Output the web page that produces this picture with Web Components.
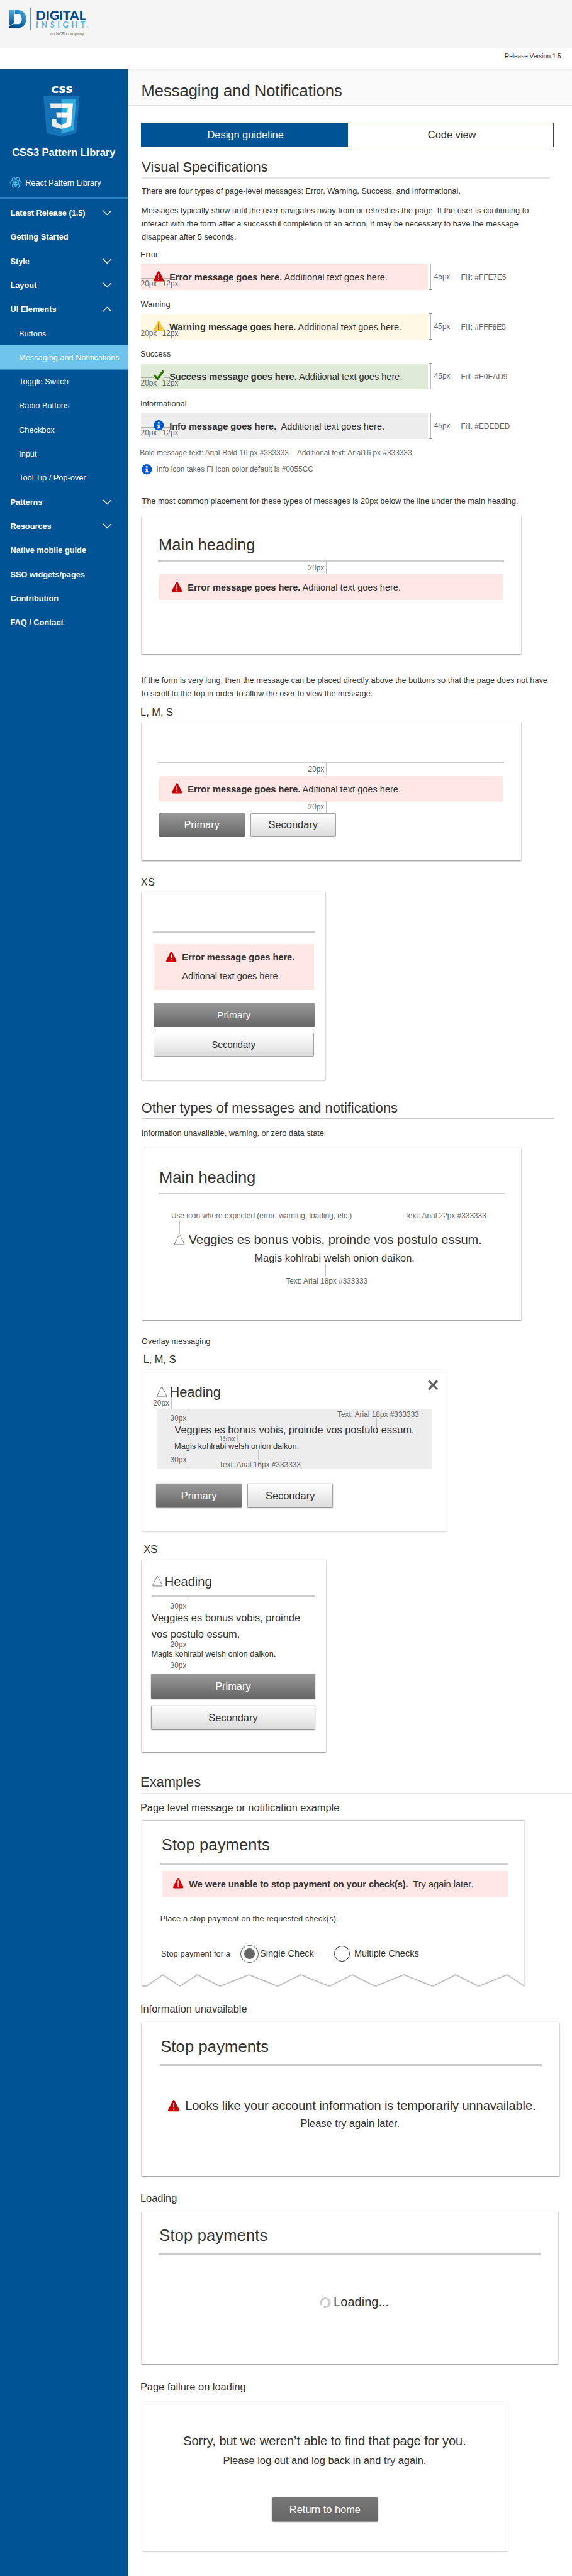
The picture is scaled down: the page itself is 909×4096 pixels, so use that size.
<!DOCTYPE html>
<html lang="en">
<head>
<meta charset="utf-8">
<title>Messaging and Notifications</title>
<style>
  html, body { margin: 0; padding: 0; background: #fff; }
  body { height: 4096px; overflow: hidden; font-family: "Liberation Sans", Arial, sans-serif; color: #333; }
</style>
</head>
<body>
<pattern-app></pattern-app>
<script>
const define = (name, html, setup) => {
  const tpl = document.createElement('template');
  tpl.innerHTML = html;
  customElements.define(name, class extends HTMLElement {
    constructor() {
      super();
      this.attachShadow({ mode: 'open' }).appendChild(tpl.content.cloneNode(true));
    }
    connectedCallback() { if (setup) setup(this, this.shadowRoot); }
  });
};

/* ---------- icons ---------- */
const TRI = 'M7.5 1.1Q9-.9 10.5 1.1L17.7 15.3Q18.6 18 16.2 18H1.8Q-.6 18 .3 15.3Z';
const ICONS = {
  error: `<svg viewBox="0 0 18 18"><path d="${TRI}" fill="#c00"/><rect x="8.2" y="5" width="1.7" height="7.2" fill="#fff"/><rect x="8.1" y="13.6" width="1.9" height="2" fill="#fff"/></svg>`,
  warning: `<svg viewBox="0 0 18 18"><path d="${TRI}" fill="#ffc72c"/><rect x="8.2" y="5" width="1.7" height="7.2" fill="#333"/><rect x="8.1" y="13.6" width="1.9" height="2" fill="#333"/></svg>`,
  success: `<svg viewBox="0 0 18 18"><path d="M1.8 9.3L6.8 14.6L16.2 2.2" fill="none" stroke="#2d7400" stroke-width="4" stroke-linejoin="round" stroke-linecap="round"/></svg>`,
  info: `<svg viewBox="0 0 18 18"><circle cx="9" cy="9" r="9" fill="#0055cc"/><rect x="7.5" y="3.4" width="3" height="2.6" fill="#fff"/><path d="M6.2 7.4H10.6V12.6H12V14.4H6.2V12.6H7.6V9.2H6.2Z" fill="#fff"/></svg>`,
  outline: `<svg viewBox="0 0 18 18"><path d="M8 1.3Q9 .1 10 1.3L17.2 15.6Q17.9 17.5 16.2 17.5H1.8Q.1 17.5 .8 15.6Z" fill="none" stroke="#666" stroke-width="1"/></svg>`,
  close: `<svg viewBox="0 0 18 18"><path d="M1.6 1.6L16.4 16.4M16.4 1.6L1.6 16.4" stroke="#666" stroke-width="3.6"/></svg>`,
  spinner: `<svg viewBox="0 0 19 19"><path d="M2.2 13.2A7.6 7.6 0 1 1 6.2 16.5" fill="none" stroke="#ccc" stroke-width="3.4"/></svg>`,
  chevron: `<svg viewBox="0 0 16 10"><path d="M.7 .9L8 8.3L15.3 .9" fill="none" stroke="#fff" stroke-width="1.5"/></svg>`,
  react: `<svg viewBox="0 0 22 20"><g fill="none" stroke="#5cc6f0" stroke-width="1"><ellipse cx="11" cy="10" rx="10" ry="3.8"/><ellipse cx="11" cy="10" rx="10" ry="3.8" transform="rotate(60 11 10)"/><ellipse cx="11" cy="10" rx="10" ry="3.8" transform="rotate(120 11 10)"/></g><circle cx="11" cy="10" r="2.2" fill="#5cc6f0"/></svg>`,
  shield: `<svg viewBox="30 0 451 512" preserveAspectRatio="none"><path d="M30 0H481L440 462L255 512L71 462Z" fill="#1572b6"/><path d="M255 472L405 431L440 37H255Z" fill="#33a9dc"/><g fill="#ebebeb"><path d="M115 90H255V143H120Z"/><path d="M190 202H255V264H195Z"/><path d="M134 292H191L195 335L255 356V412L141 379Z"/></g><g fill="#fff"><path d="M255 90H398L375 379L255 412V356L316 335L322 264H255V202H329L335 143H255Z"/></g></svg>`,
};
customElements.define('ui-icon', class extends HTMLElement {
  static observedAttributes = ['name'];
  constructor() {
    super();
    this.attachShadow({ mode: 'open' });
  }
  attributeChangedCallback(attr, old, name) {
    this.shadowRoot.innerHTML = `<style>:host{display:block;flex:none;width:18px;height:18px}svg{display:block;width:100%;height:100%;overflow:visible}</style>${ICONS[name] || ''}`;
  }
});

/* ---------- typography ---------- */
define('ui-text', `<style>
  :host{display:block;font-size:14px;line-height:20px;white-space:nowrap;color:#333}
  :host([size="body"]){line-height:23px}
  :host([size="note"]){font-size:13px;line-height:16px;color:#666}
  :host([size="sub"]){font-size:18px;line-height:24px}
  :host([size="lead"]){font-size:22px;line-height:28px}
  :host([size="h2"]){font-size:24px;line-height:30px}
  :host([size="h1"]){font-size:28px;line-height:34px}
</style><slot></slot>`);
define('ui-rule', `<style>:host{display:block;height:3px;background:#ccc}:host([thin]){height:1px}:host([soft]){height:2px;background:#e4e4e4}</style>`);

/* ---------- top ---------- */
define('top-bar', `<style>
  :host{display:block;height:119px;background:#fff}
  .brand{height:84px;background:#f5f5f5;display:flex;padding:13px 0 0 16px;box-sizing:border-box}
  .mark{display:block;width:30px;height:31px;margin-top:5px}
  i{display:block;width:1.6px;height:40px;background:#6b97c2;margin:0 8px 0 6.6px}
  .release{display:flex;justify-content:flex-end;font-size:11px;line-height:14px;padding:8.5px 19px 0 0;color:#333}
  svg{overflow:visible}
</style>
<div class="brand">
  <svg class="mark" viewBox="0 0 30 31"><defs>
    <linearGradient id="a" x1="0" y1="0" x2="0" y2="1"><stop offset="0" stop-color="#4aaee4"/><stop offset="1" stop-color="#00539b"/></linearGradient>
    <linearGradient id="b" x1="0" y1="1" x2="1" y2="0"><stop offset="0" stop-color="#003f7d"/><stop offset=".5" stop-color="#0a6bb0"/><stop offset="1" stop-color="#56b9ea"/></linearGradient></defs>
    <path d="M0 0H8V23L0 26.500Z" fill="url(#a)"/>
    <path d="M9.500 0H14C24 0 29 6 29 15.500S24 31 14 31H0V27.500L7 24.500H14C19 24.500 21.500 21 21.500 15.500S19 6.500 14 6.500H9.500Z" fill="url(#b)"/></svg>
  <i></i>
  <svg width="96" height="52" viewBox="0 0 96 52">
    <text x="0" y="21.500" font-family="Lato" font-weight="900" font-size="22.500" fill="#004b8d" textLength="87" lengthAdjust="spacingAndGlyphs">DIGITAL</text>
    <text x="0" y="35" font-family="Lato" font-weight="700" font-size="14" fill="#5bb9ea" textLength="86">INSIGHT</text>
    <text x="87" y="35" font-family="Lato" font-size="3" fill="#5bb9ea">TM</text>
    <text x="25" y="48" font-family="Roboto" font-weight="500" font-size="8" fill="#8a8c8e" textLength="59">an NCR company</text>
  </svg>
</div>
<div class="release">Release Version 1.5</div>`);

/* ---------- sidebar ---------- */
define('nav-item', `<style>
  :host{display:flex;align-items:center;justify-content:space-between;height:42px;padding:0 27px 0 18px;box-sizing:border-box;font-size:14px;font-weight:bold;color:#fff;white-space:nowrap}
  :host([sub]){font-weight:normal;padding:0 0 0 33px}
  :host([current]){background:#6ec4ed;box-shadow:0 0 0 1px #3b98d0}
  ui-icon{display:none;width:16px;height:10px}
  :host([menu]) ui-icon{display:block}
  :host([menu="open"]) ui-icon{transform:scaleY(-1)}
</style><span><slot></slot></span><ui-icon name="chevron"></ui-icon>`);
define('side-nav', `<style>
  :host{display:block;width:222px;flex:none;background:#005395;color:#fff}
  .head{height:225px;display:flex;flex-direction:column;align-items:center;padding-top:21px;box-sizing:border-box}
  .word{display:block;margin-right:7px;overflow:visible}
  .shield{width:63px;height:71px;margin:0 8px 0 0}
  b{font-size:18px;line-height:24px;margin-top:15px;white-space:nowrap}
  .react{align-self:stretch;display:flex;align-items:center;height:20px;margin:30.500px 0 0 16px;font-size:14px;gap:6px}
  .react ui-icon{width:22px;height:20px}
  hr{border:0;margin:0 0 4px;height:2px;background:#2484c4}
</style>
<div class="head">
  <svg class="word" width="40" height="28" viewBox="0 0 40 28"><text x="1" y="21.500" font-family="Open Sans" font-weight="800" font-size="17" fill="#fff" textLength="38" lengthAdjust="spacingAndGlyphs">CSS</text></svg>
  <ui-icon class="shield" name="shield"></ui-icon>
  <b>CSS3 Pattern Library</b>
  <div class="react"><ui-icon name="react"></ui-icon><span>React Pattern Library</span></div>
</div>
<hr>
<nav>
<nav-item menu>Latest Release (1.5)</nav-item><nav-item>Getting Started</nav-item>
<nav-item menu>Style</nav-item><nav-item menu>Layout</nav-item><nav-item menu="open">UI Elements</nav-item>
<nav-item sub>Buttons</nav-item><nav-item sub current>Messaging and Notifications</nav-item>
<nav-item sub>Toggle Switch</nav-item><nav-item sub>Radio Buttons</nav-item><nav-item sub>Checkbox</nav-item>
<nav-item sub>Input</nav-item><nav-item sub>Tool Tip / Pop-over</nav-item>
<nav-item menu>Patterns</nav-item><nav-item menu>Resources</nav-item><nav-item>Native mobile guide</nav-item>
<nav-item>SSO widgets/pages</nav-item><nav-item>Contribution</nav-item><nav-item>FAQ / Contact</nav-item>
</nav>`);

/* ---------- content pieces ---------- */
define('page-title', `<style>
  :host{display:block;height:65px;box-sizing:border-box;padding:21.300px 0 0 24px;background:linear-gradient(#ececec,#fafafa 5px);border-top:1px solid #e4e4e4;border-bottom:1px solid #e2e2e2}
</style><ui-text size="h1"><slot></slot></ui-text>`);
define('tab-bar', `<style>
  :host{display:grid;grid-template-columns:360px 359px;height:42px;box-sizing:border-box;border:1px solid #005395;width:719px;font-size:18px;line-height:40px;text-align:center}
  .on{background:#005395;color:#fff} span{padding-left:3px}
</style><span class="on"><slot name="active"></slot></span><span><slot></slot></span>`);
define('demo-card', `<style>
  :host{display:block;position:relative;box-sizing:border-box;background:#fff;box-shadow:0 1px 2px rgba(0,0,0,.48)}
  :host([torn]){background:none;box-shadow:none}
  .edge{display:none;position:absolute;inset:0;width:100%;height:100%;overflow:visible;filter:drop-shadow(0 1px 1px rgba(0,0,0,.6))}
  :host([torn]) .edge{display:block}
  .in{position:relative}
</style><svg class="edge" viewBox="0 0 666 288"><path fill="#fff" d="M0 0H666V288L635.800 268L586 288L546 268L506 288L455.600 268L405.800 288L365.800 268L325.800 288L276 268L236 288L186 268L135.700 288L95.800 268L65.700 288L36 268L7 288H0Z"/><path fill="none" stroke="#bdbdbd" stroke-width="1" d="M666 288L635.800 268L586 288L546 268L506 288L455.600 268L405.800 288L365.800 268L325.800 288L276 268L236 288L186 268L135.700 288L95.800 268L65.700 288L36 268L7 288H0"/></svg>
<div class="in"><div style="display:flow-root"><slot></slot></div></div>`);
define('message-bar', `<style>
  :host{display:flex;align-items:flex-start;height:45px;box-sizing:border-box;padding:7.700px 0 0 22px;gap:10px;font-size:16px;line-height:32px;white-space:nowrap;color:#333;background:#ffe7e5}
  :host([type="warning"]){background:#fff8e5}
  :host([type="success"]){background:#e0ead9}
  :host([type="info"]){background:#ededed}
  :host([stacked]){height:80px}
  ui-icon{margin-top:5px;position:relative}
  span{position:relative}
</style><ui-icon name="error"></ui-icon><span><slot></slot></span>`,
  (el, root) => {
    root.querySelector('ui-icon').setAttribute('name', el.getAttribute('type') || 'error');
  });
/* Distance marker: a vertical line with its label on the left */
define('dim-mark', `<style>
  :host{position:absolute;left:calc(var(--x)*1px - 48px);width:50px;display:flex;align-items:center;justify-content:flex-end;font-size:13px;line-height:16px;color:#666;white-space:nowrap}
  i{align-self:stretch;width:1.700px;margin-left:3.500px;background:#c4c4c4}
</style><slot></slot><i></i>`);
/* Message bar with its spacing, height and fill notes */
define('spec-row', `<style>
  :host{display:flex;height:45px;font-size:13px;line-height:16px;color:#666;white-space:nowrap}
  .bar{width:500px;position:relative}
  .l{position:absolute;top:24px;height:1.600px;background:#000;opacity:.25}
  .n{position:absolute;top:26.500px}
  .br{width:7px;height:46px;margin:-.500px 3px 0 1px;border:solid #999;border-width:1px 0;box-sizing:border-box;display:flex;justify-content:center}
  .br i{width:1.600px;background:#bbb}
  .px{width:47px;padding-top:14.500px}.fill{padding-top:15.500px}
</style>
<div class="bar"><message-bar><slot></slot></message-bar>
<div class="l" style="left:1px;width:21px"></div><div class="l" style="left:40px;width:11px"></div>
<span class="n" style="left:0">20px</span><span class="n" style="left:37.500px">12px</span></div>
<div class="br"><i></i></div><span class="px">45px</span><span class="fill"></span>`,
  (el, root) => {
    const bar = root.querySelector('message-bar'), type = el.getAttribute('type');
    bar.setAttribute('type', type);
    bar.shadowRoot.querySelector('ui-icon').setAttribute('name', type);
    root.querySelector('.fill').textContent = 'Fill: ' + el.getAttribute('fill');
  });
define('ui-button', `<style>
  :host{display:flex;align-items:center;justify-content:center;box-sizing:border-box;width:149px;height:42px;font-size:18px;border-radius:1.500px;color:#333;border:1px solid #a3a3a3;background:linear-gradient(#fff,#dcdcdc)}
  :host([primary]){color:#fff;border:0;background:linear-gradient(#999,#666)}
  :host([raised]){box-shadow:0 1px 1.500px rgba(0,0,0,.5)}
</style><span><slot></slot></span>`);
define('radio-dot', `<style>
  :host{display:flex;align-items:center;justify-content:center;box-sizing:border-box;width:27px;height:27px;border:1px solid #333;border-radius:50%}
  :host([checked]){width:31px;height:31px;border-color:#4d5a66}
  :host([checked])::before{content:"";width:18px;height:18px;border-radius:50%;background:#666}
</style>`);

/* ---------- page ---------- */
define('guide-content', `<style>
  :host{display:block;flex:1;min-width:0}
  .row{display:flex;align-items:center}
  .btns{display:flex;gap:10px}
  .over{position:absolute}
  .radios{display:grid;grid-template-columns:138.300px 33.700px 129.800px 34.500px auto;align-items:center;height:30px}
</style>
<page-title>Messaging and Notifications</page-title>
<tab-bar style="margin:30px 0 0 23px"><span slot="active">Design guideline</span>Code view</tab-bar>
<ui-text size="h2" style="margin:19.700px 0 0 25px">Visual Specifications</ui-text>
<ui-rule soft style="margin:3.300px 0 0 24.700px;width:711px"></ui-rule>
<ui-text size="body" style="margin:11.650px 0 0 24.700px">There are four types of page-level messages: Error, Warning, Success, and Informational.</ui-text>
<ui-text size="body" style="margin:10.300px 0 0 24.700px">Messages typically show until the user navigates away from or refreshes the page. If the user is continuing to<br>interact with the form after a successful completion of an action, it may be necessary to have the message<br>disappear after 5 seconds.</ui-text>
<ui-text style="margin:9.200px 0 5.850px 22.300px">Error</ui-text>
<spec-row type="error" fill="#FFE7E5" style="margin-left:23px"><b>Error message goes here.</b> Additional text goes here.</spec-row>
<ui-text style="margin:15.800px 0 5.850px 23px">Warning</ui-text>
<spec-row type="warning" fill="#FFF8E5" style="margin-left:23px"><b>Warning message goes here.</b> Additional text goes here.</spec-row>
<ui-text style="margin:15.800px 0 5.850px 22.500px">Success</ui-text>
<spec-row type="success" fill="#E0EAD9" style="margin-left:23px"><b>Success message goes here.</b> Additional text goes here.</spec-row>
<ui-text style="margin:15.800px 0 5.850px 22.300px">Informational</ui-text>
<spec-row type="info" fill="#EDEDED" style="margin-left:23px"><b>Info message goes here.</b>&nbsp; Additional text goes here.</spec-row>
<ui-text size="note" style="margin:16.500px 0 0 21.500px"><span style="display:inline-block;width:273.700px">Bold message text: Arial-Bold 16 px #333333</span>Additional text: Arial16 px #333333</ui-text>
<div class="row" style="margin:11.800px 0 0 25px;height:18px;gap:7.500px"><ui-icon name="info"></ui-icon><ui-text size="note">Info icon takes FI Icon color default is #0055CC</ui-text></div>
<ui-text size="body" style="margin:35.350px 0 0 25px">The most common placement for these types of messages is 20px below the line under the main heading.</ui-text>

<demo-card style="margin:14.350px 0 0 25px;width:660px;height:240px">
  <ui-text size="h1" style="margin:33.300px 0 0 29.300px">Main heading</ui-text>
  <ui-rule style="margin:10px 0 0 28.300px;width:603px"></ui-rule>
  <message-bar style="margin:20.700px 0 0 30px;width:600px"><b>Error message goes here.</b> Aditional text goes here.</message-bar>
  <dim-mark style="--x:321;top:80px;height:21.500px">20px</dim-mark>
</demo-card>

<ui-text size="body" style="margin:35.650px 0 0 24.500px">If the form is very long, then the message can be placed directly above the buttons so that the page does not have<br>to scroll to the top in order to allow the user to view the message.</ui-text>
<ui-text size="sub" style="margin:8.100px 0 0 22.500px">L, M, S</ui-text>
<demo-card style="margin:5.250px 0 0 25px;width:660px;height:240.500px">
  <ui-rule style="margin:69.300px 0 0 28.300px;width:603px"></ui-rule>
  <message-bar style="margin:21px 0 0 30px;width:600px"><b>Error message goes here.</b> Aditional text goes here.</message-bar>
  <div class="btns" style="margin:19.700px 0 0 30px"><ui-button primary>Primary</ui-button><ui-button>Secondary</ui-button></div>
  <dim-mark style="--x:321;top:72px;height:21px">20px</dim-mark>
  <dim-mark style="--x:321;top:138px;height:20px">20px</dim-mark>
</demo-card>

<ui-text size="sub" style="margin:26.760px 0 0 23.300px">XS</ui-text>
<demo-card style="margin:4.750px 0 0 25px;width:320px;height:327px">
  <ui-rule style="margin:68.300px 0 0 19.500px;width:281px"></ui-rule>
  <message-bar stacked style="margin:19.700px 0 0 20px;width:280px"><b>Error message goes here.</b><br>Aditional text goes here.</message-bar>
  <ui-button primary style="margin:22px 0 0 20px;width:281px;font-size:17px">Primary</ui-button>
  <ui-button style="margin:10px 0 0 20px;width:280px;font-size:16px">Secondary</ui-button>
</demo-card>

<ui-text size="h2" style="margin:33.700px 0 0 24.300px">Other types of messages and notifications</ui-text>
<ui-rule thin style="margin:3.300px 0 0 24.500px;width:717.500px"></ui-rule>
<ui-text style="margin:15.150px 0 0 24.300px">Information unavailable, warning, or zero data state</ui-text>
<demo-card style="margin:15.850px 0 0 26px;width:660px;height:300px">
  <ui-text size="h1" style="margin:34.300px 0 0 29.300px">Main heading</ui-text>
  <ui-rule style="margin:10px 0 0 28.300px;width:603px"></ui-rule>
  <div class="row" style="margin:29.200px 61px 0 50px;justify-content:space-between"><ui-text size="note">Use icon where expected (error, warning, loading, etc.)</ui-text><ui-text size="note">Text: Arial 22px #333333</ui-text></div>
  <div class="row" style="margin:19.900px 0 0 56px;gap:6.500px"><ui-icon name="outline"></ui-icon><ui-text size="lead">Veggies es bonus vobis, proinde vos postulo essum.</ui-text></div>
  <ui-text size="sub" style="margin:6.400px 0 0 195.300px">Magis kohlrabi welsh onion daikon.</ui-text>
  <ui-text size="note" style="margin:19.700px 0 0 250px">Text: Arial 18px #333333</ui-text>
  <dim-mark style="--x:64;top:128px;height:21.500px"></dim-mark>
  <dim-mark style="--x:524;top:128px;height:21.500px"></dim-mark>
  <dim-mark style="--x:318;top:202px;height:21.500px"></dim-mark>
</demo-card>

<ui-text style="margin:27.150px 0 0 24.700px">Overlay messaging</ui-text>
<ui-text size="sub" style="margin:10.350px 0 0 27.500px">L, M, S</ui-text>
<demo-card style="margin:5.500px 0 0 26px;width:530.500px;height:280px">
  <div class="row" style="margin:23.400px 0 0 25px;gap:4.300px"><ui-icon name="outline"></ui-icon><ui-text size="h2">Heading</ui-text></div>
  <ui-icon name="close" class="over" style="right:15.700px;top:17px"></ui-icon>
  <div style="margin:14.600px 0 0 25px;width:480px;height:105px;background:#ededed;display:flow-root">
    <ui-text size="sub" style="margin:24.500px 0 0 31px">Veggies es bonus vobis, proinde vos postulo essum.</ui-text>
    <ui-text style="margin:6.700px 0 0 30.700px">Magis kohlrabi welsh onion daikon.</ui-text>
  </div>
  <div class="btns" style="margin:25px 0 0 24px"><ui-button primary raised>Primary</ui-button><ui-button raised>Secondary</ui-button></div>
  <dim-mark style="--x:50;top:48px;height:20.500px">20px</dim-mark>
  <dim-mark style="--x:80;top:69px;height:31px">30px</dim-mark>
  <dim-mark style="--x:165;top:113px;height:15px">15px</dim-mark>
  <dim-mark style="--x:80;top:142px;height:30px">30px</dim-mark>
  <dim-mark style="--x:407;top:84px;height:18px"></dim-mark>
  <dim-mark style="--x:201;top:139px;height:17px"></dim-mark>
  <ui-text size="note" class="over" style="left:339.500px;top:69.500px">Text: Arial 18px #333333</ui-text>
  <ui-text size="note" class="over" style="left:133.500px;top:157.500px">Text: Arial 16px #333333</ui-text>
</demo-card>

<ui-text size="sub" style="margin:20.500px 0 0 28.300px">XS</ui-text>
<demo-card style="margin:6.500px 0 0 25px;width:320.500px;height:335px">
  <div class="row" style="margin:24.400px 0 0 18px;gap:4px"><ui-icon name="outline" style="margin-top:-3px"></ui-icon><ui-text size="lead">Heading</ui-text></div>
  <ui-rule style="margin:8.900px 0 0 18px;width:284px"></ui-rule>
  <ui-text size="sub" style="margin:21.700px 0 0 17px;line-height:29px">Veggies es bonus vobis, proinde<br>vos postulo essum.</ui-text>
  <ui-text style="margin:10.150px 0 0 16.500px">Magis kohlrabi welsh onion daikon.</ui-text>
  <ui-button primary raised style="margin:24.850px 0 0 16px;width:286px;height:43px">Primary</ui-button>
  <ui-button raised style="margin:12px 0 0 16px;width:286px">Secondary</ui-button>
  <dim-mark style="--x:81;top:65px;height:31px">30px</dim-mark>
  <dim-mark style="--x:81;top:137px;height:21px">20px</dim-mark>
  <dim-mark style="--x:81;top:170px;height:29px">30px</dim-mark>
</demo-card>

<ui-text size="h2" style="margin:36.700px 0 0 22.500px">Examples</ui-text>
<ui-rule soft style="margin:4.300px 0 0 23px"></ui-rule>
<ui-text size="sub" style="margin:12.760px 0 0 22.300px">Page level message or notification example</ui-text>
<demo-card torn style="margin:9.750px 0 0 25.700px;width:666px;height:288px">
  <ui-text size="h1" style="margin:25.500px 0 0 33.700px;letter-spacing:.15px">Stop payments</ui-text>
  <ui-rule style="margin:14px 0 0 32px;width:606px"></ui-rule>
  <message-bar style="margin:11px 0 0 33.500px;width:604px;padding-left:20.500px;gap:9.500px"><b style="letter-spacing:-.07px">We were unable to stop payment on your check(s).</b>&nbsp; Try again later.</message-bar>
  <ui-text style="margin:29.150px 0 0 31.500px;letter-spacing:.13px">Place a stop payment on the requested check(s).</ui-text>
  <div class="radios" style="margin:34.850px 0 0 33px">
    <ui-text style="letter-spacing:.13px">Stop payment for a</ui-text><radio-dot checked></radio-dot><ui-text style="font-size:16px;margin-top:-2px">Single Check</ui-text>
    <radio-dot></radio-dot><ui-text style="font-size:16px;margin-top:-2px">Multiple Checks</ui-text>
  </div>
</demo-card>

<ui-text size="sub" style="margin:28.260px 0 0 22.300px">Information unavailable</ui-text>
<demo-card style="margin:10.750px 0 0 25px;width:727.500px;height:268px">
  <ui-text size="h1" style="margin:25.800px 0 0 32.700px;letter-spacing:.15px">Stop payments</ui-text>
  <ui-rule style="margin:13.900px 0 0 31px;width:666px"></ui-rule>
  <div class="row" style="margin:56.200px 0 0 46px;gap:9.500px"><ui-icon name="error" style="width:20px;height:20px;margin-top:-3px"></ui-icon><ui-text size="lead" style="letter-spacing:-.1px">Looks like your account information is temporarily unnavailable.</ui-text></div>
  <ui-text size="sub" style="margin:4.400px 0 0 276.300px">Please try again later.</ui-text>
</demo-card>

<ui-text size="sub" style="margin:27.260px 0 0 22.300px">Loading</ui-text>
<demo-card style="margin:10.240px 0 0 25px;width:725.500px;height:267px">
  <ui-text size="h1" style="margin:25.300px 0 0 30.700px;letter-spacing:.15px">Stop payments</ui-text>
  <ui-rule style="margin:13.900px 0 0 29px;width:666px"></ui-rule>
  <div class="row" style="margin:69.200px 0 0 311px;gap:4px"><ui-icon name="spinner" style="width:19px;height:19px"></ui-icon><ui-text size="lead">Loading...</ui-text></div>
</demo-card>

<ui-text size="sub" style="margin:28.260px 0 0 22.300px">Page failure on loading</ui-text>
<demo-card style="margin:12.740px 0 0 26px;width:636px;height:259.500px">
  <ui-text size="lead" style="margin:55.400px 1px 0 0;text-align:center;letter-spacing:-.06px">Sorry, but we weren’t able to find that page for you.</ui-text>
  <ui-text size="sub" style="margin:7.400px 1px 0 0;text-align:center">Please log out and log back in and try again.</ui-text>
  <ui-button primary raised style="margin:52.200px auto 0;width:185px;border-radius:3px;background:linear-gradient(#777,#666)">Return to home</ui-button>
</demo-card>`);
define('pattern-app', `<style>
  :host{display:block;zoom:.9124}
  .main{display:flex;height:4372px}
</style><top-bar></top-bar><div class="main"><side-nav></side-nav><guide-content></guide-content></div>`);
</script>
</body>
</html>
